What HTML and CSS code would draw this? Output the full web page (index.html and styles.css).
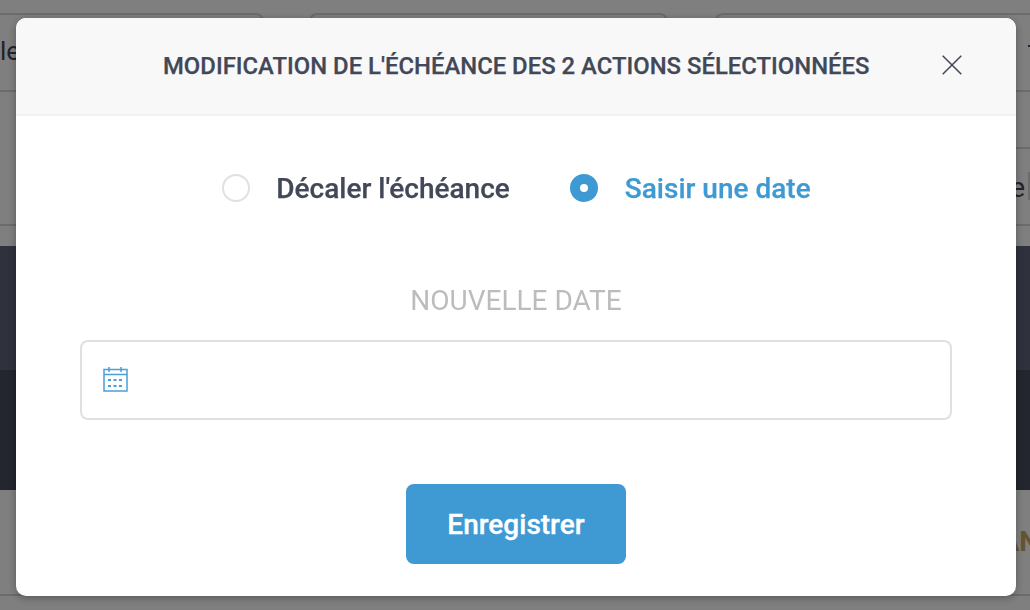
FILE: index.html
```html
<!DOCTYPE html>

<html>
    <head>
        <meta charset="UTF-8">
        <title>Modification de l'échéance</title>

        <link rel="stylesheet" href="styles.css">
    </head>

    <body>
        <div class="page">
            <div class="filters">
                <div class="filter filter1"><span class="filter-text">le</span></div>
                <div class="filter filter2"></div>
                <div class="filter filter3"><span class="filter-mark"></span></div>
            </div>
            <div class="subbar">
                <div class="subbar-box"><span class="subbar-text">e</span><span class="subbar-mark"></span></div>
            </div>
            <div class="spacer"></div>
            <div class="band-light"></div>
            <div class="band-dark"></div>
            <div class="footer"><span class="footer-text">AN</span></div>
        </div>

        <div class="overlay">
            <div class="modal">
                <div class="modal-header">
                    <h1 class="modal-title">MODIFICATION DE L'ÉCHÉANCE DES 2 ACTIONS SÉLECTIONNÉES</h1>
                    <button class="close-button">
                        <svg width="20" height="20" viewBox="0 0 20 20">
                            <path d="M0.7 0.7L19.3 19.3M19.3 0.7L0.7 19.3" stroke="#424857" stroke-width="1.5" fill="none"/>
                        </svg>
                    </button>
                </div>

                <div class="modal-body">
                    <div class="choices">
                        <div class="choice">
                            <span class="radio"></span>
                            <span class="choice-label">Décaler l'échéance</span>
                        </div>
                        <div class="choice choice-active">
                            <span class="radio radio-active"></span>
                            <span class="choice-label">Saisir une date</span>
                        </div>
                    </div>

                    <div class="field-label">NOUVELLE DATE</div>

                    <div class="date-input">
                        <svg class="date-icon" width="26" height="26" viewBox="0 0 26 26">
                            <rect x="1" y="3.5" width="23" height="21.5" fill="none" stroke="#4b9fd6" stroke-width="1.5"/>
                            <path d="M1 8.5H24" stroke="#4b9fd6" stroke-width="1.5"/>
                            <path d="M6 1V6M18 1V6" stroke="#4b9fd6" stroke-width="1.5"/>
                            <path d="M5 14H8M10.5 14H13.5M16 14H19M5 20H8M10.5 20H13.5M16 20H19" stroke="#4b9fd6" stroke-width="1.8"/>
                        </svg>
                    </div>

                    <button class="save-button">Enregistrer</button>
                </div>
            </div>
        </div>
    </body>
</html>
```

FILE: styles.css
```css
* {
    margin: 0;
    padding: 0;
    box-sizing: border-box;
}

html, body {
    width: 100%;
    height: 100%;
    overflow: hidden;
}

body {
    font-family: Roboto, "Liberation Sans", sans-serif;
    background-color: #ffffff;
}

.page {
    height: 610px;
    overflow: hidden;
    display: flex;
    flex-direction: column;
}

.filters {
    height: 92px;
    flex-shrink: 0;
    padding-top: 13px;
    display: flex;
    border-bottom: 2px solid #d8d8d8;
    overflow: hidden;
}

.filter {
    height: 80px;
    border: 2px solid #d8d8d8;
    border-radius: 8px;
    flex-shrink: 0;
    display: flex;
    align-items: center;
}

.filter1 {
    width: 264px;
    border-left: none;
    border-radius: 0 8px 8px 0;
}

.filter2 {
    width: 359px;
    margin-left: 45px;
}

.filter3 {
    width: 315px;
    margin-left: 47px;
    border-right: none;
    border-radius: 8px 0 0 8px;
    justify-content: flex-end;
}

.filter-text {
    font-size: 26px;
    color: #424857;
    margin-bottom: 4px;
}

.filter-mark {
    width: 2px;
    height: 2px;
    margin-bottom: 14px;
    background-color: #424857;
}

.subbar {
    height: 134px;
    flex-shrink: 0;
    border-bottom: 2px solid #d8d8d8;
    display: flex;
    justify-content: flex-end;
    padding-top: 55px;
}

.subbar-box {
    width: 300px;
    height: 77px;
    border-top: 2px solid #d8d8d8;
    display: flex;
    justify-content: flex-end;
    align-items: flex-start;
    padding-top: 23px;
}

.subbar-text {
    font-size: 28px;
    line-height: 32px;
    color: #424857;
    margin-right: 3px;
}

.subbar-mark {
    width: 2px;
    height: 28px;
    background-color: #d8d8d8;
}

.spacer {
    height: 20px;
    flex-shrink: 0;
}

.band-light {
    height: 124px;
    flex-shrink: 0;
    background-color: #5e6479;
}

.band-dark {
    height: 120px;
    flex-shrink: 0;
    background-color: #474c5c;
}

.footer {
    height: 106px;
    flex-shrink: 0;
    border-bottom: 2px solid #d8d8d8;
    display: flex;
    justify-content: flex-end;
    padding-top: 36px;
}

.footer-text {
    font-size: 28px;
    line-height: 32px;
    font-weight: 700;
    color: #c9a862;
    margin-right: -9px;
}

.overlay {
    position: fixed;
    top: 0;
    left: 0;
    width: 100%;
    height: 100%;
    background-color: rgba(0, 0, 0, 0.5);
    padding: 18px 14px 14px 16px;
}

.modal {
    width: 1000px;
    height: 578px;
    background-color: #ffffff;
    border-radius: 10px;
    overflow: hidden;
    box-shadow: 0 2px 8px rgba(0, 0, 0, 0.3);
}

.modal-header {
    height: 98px;
    background-color: #f8f8f8;
    border-bottom: 2px solid #f1f1f1;
    display: flex;
    align-items: center;
    padding-left: 147px;
    padding-right: 54px;
    justify-content: space-between;
}

.modal-title {
    font-size: 23.87px;
    font-weight: 500;
    color: #424857;
    -webkit-text-stroke: 0.25px #424857;
}

.close-button {
    border: none;
    background: none;
    width: 20px;
    height: 20px;
    margin-bottom: 2px;
}

.modal-body {
    display: flex;
    flex-direction: column;
    align-items: center;
}

.choices {
    display: flex;
    gap: 60px;
    margin-top: 57px;
    height: 30px;
    align-items: center;
}

.choice {
    display: flex;
    align-items: center;
    gap: 26px;
    font-size: 28px;
    font-weight: 500;
    color: #424857;
    -webkit-text-stroke: 0.25px #424857;
}

.choice:first-child {
    padding-left: 1px;
}

.choice-active {
    gap: 27px;
    color: #3f9ad3;
    -webkit-text-stroke: 0.25px #3f9ad3;
}

.radio {
    width: 28px;
    height: 28px;
    border-radius: 50%;
    border: 2px solid #e0e0e6;
    background-color: #ffffff;
}

.radio-active {
    border: 10px solid #3f9ad3;
}

.field-label {
    margin-top: 82px;
    font-size: 28px;
    color: #bcbcbc;
    line-height: 32px;
}

.date-input {
    margin-top: 23px;
    width: 872px;
    height: 80px;
    border: 2px solid #e0e0e0;
    border-radius: 8px;
    display: flex;
    align-items: center;
    padding-left: 21px;
}

.date-icon {
    margin-bottom: 2px;
}

.save-button {
    margin-top: 64px;
    width: 220px;
    height: 80px;
    border: none;
    border-radius: 8px;
    background-color: #3f9ad3;
    color: #ffffff;
    font-family: inherit;
    font-size: 28px;
    font-weight: 500;
    -webkit-text-stroke: 0.3px #ffffff;
}
```
